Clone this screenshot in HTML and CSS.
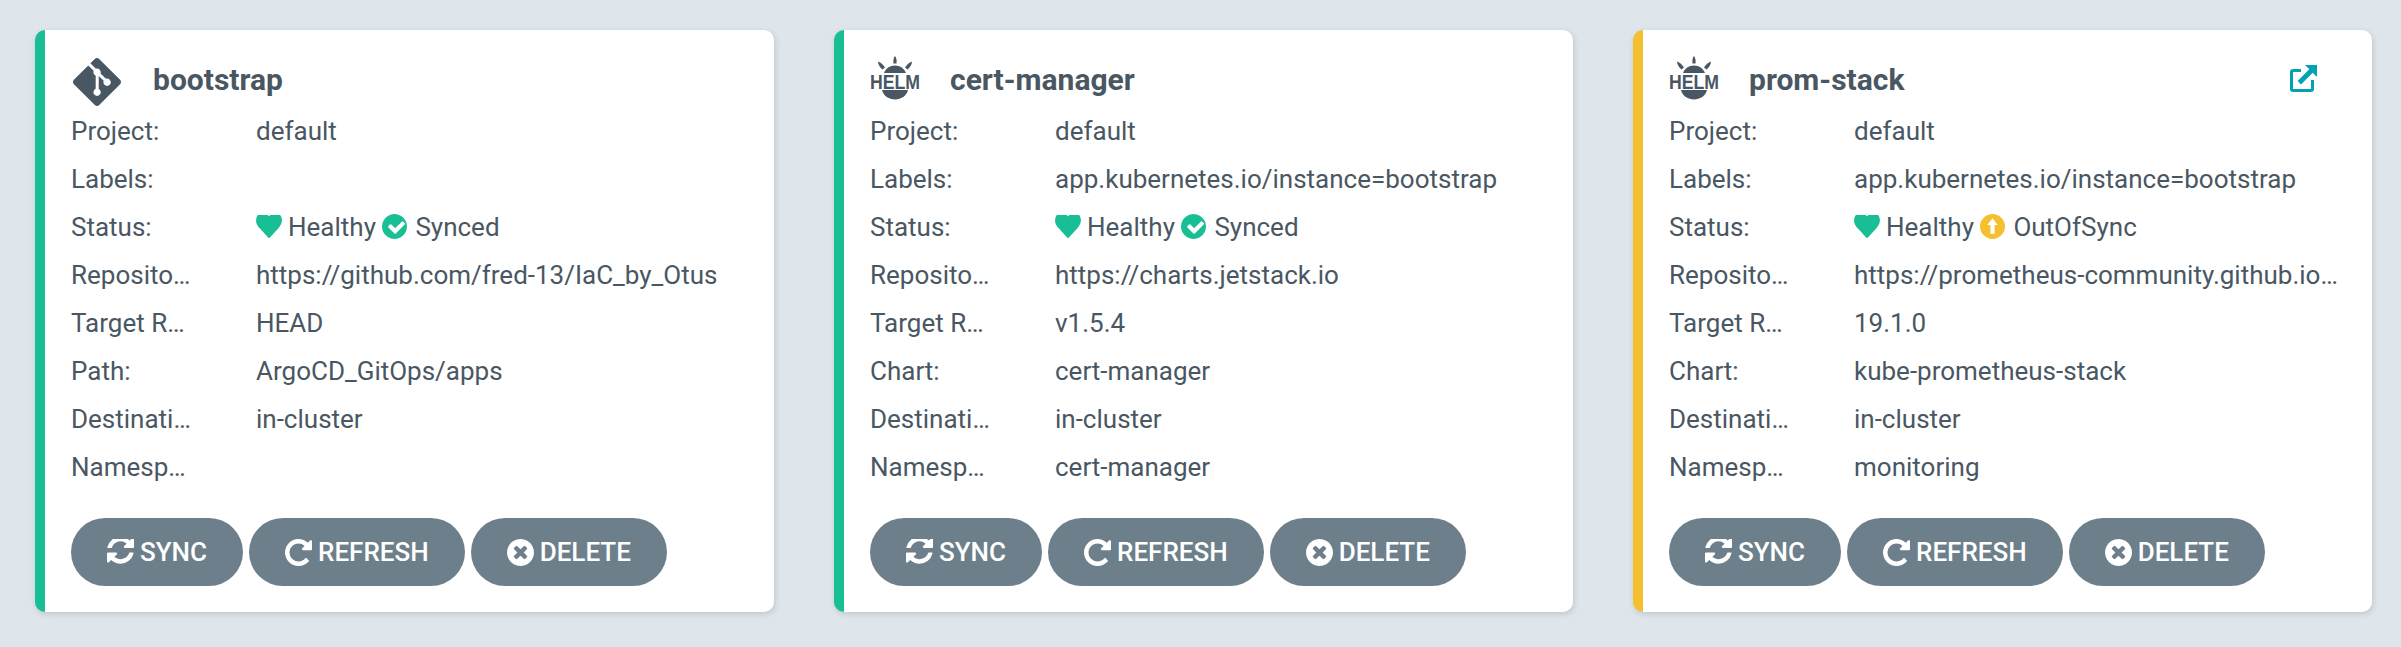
FILE: index.html
```html
<!DOCTYPE html>
<html>
<head>
  <link rel="stylesheet" href="styles.css">
</head>

<body>
  <svg class="sprites" xmlns="http://www.w3.org/2000/svg">
    <symbol id="i-git" viewBox="0 0 24 24"><path d="M23.546 10.93L13.067.452c-.604-.603-1.582-.603-2.188 0L8.708 2.627l2.76 2.76c.645-.215 1.379-.07 1.889.441.516.515.658 1.258.438 1.9l2.658 2.66c.645-.223 1.387-.078 1.9.435.721.72.721 1.884 0 2.604-.719.719-1.881.719-2.6 0-.539-.541-.674-1.337-.404-1.996L12.86 8.955v6.525c.176.086.342.203.488.348.713.721.713 1.883 0 2.6-.719.721-1.889.721-2.609 0-.719-.719-.719-1.879 0-2.598.182-.18.387-.316.605-.406V8.835c-.217-.091-.424-.222-.6-.401-.545-.545-.676-1.342-.396-2.009L7.636 3.7.45 10.881c-.6.605-.6 1.584 0 2.189l10.48 10.477c.604.604 1.582.604 2.186 0l10.43-10.43c.605-.603.605-1.582 0-2.187"/></symbol>
    <symbol id="i-helm" viewBox="0 0 50 44">
      <path d="M25 0c1.500 2 1.900 4.500 1.500 7.500h-3c-.4-3 0-5.500 1.500-7.500zM8 5.500c3 1 5 3 7 6l-2.500 2c-2.800-2.300-4.300-4.800-4.500-8zM42 5.500c-.2 3.200-1.700 5.700-4.500 8l-2.500-2c2-3 4-5 7-6zM14 17c1.500-4.500 6-7.500 11-7.500s9.500 3 11 7.500zM12 34h26c-1.500 6-7 9.500-13 9.500s-11.500-3.500-13-9.500z"/>
      <text class="helm-word" x="0" y="33" textLength="50" lengthAdjust="spacingAndGlyphs">HELM</text>
    </symbol>
    <symbol id="i-heart" viewBox="0 256 1792 1408" preserveAspectRatio="none"><path d="M896 1664q-26 0-44-18l-624-602q-10-8-27.500-26t-55.500-65.500-68-97.500-53.500-121-23.500-138q0-220 127-344t351-124q62 0 126.500 21.500t120 58 95.500 68.500 76 68q36-36 76-68t95.500-68.500 120-58 126.500-21.500q224 0 351 124t127 344q0 221-229 450l-623 600q-18 18-44 18z"/></symbol>
    <symbol id="i-check" viewBox="0 128 1536 1536"><path d="M1412 734q0-28-18-46l-91-90q-19-19-45-19t-45 19l-408 407-226-226q-19-19-45-19t-45 19l-91 90q-18 18-18 46 0 27 18 45l362 362q19 19 45 19 27 0 46-19l543-543q18-18 18-45zm124 162q0 209-103 385.500t-279.500 279.500-385.500 103-385.500-103-279.500-279.500-103-385.500 103-385.500 279.500-279.500 385.500-103 385.500 103 279.500 279.500 103 385.500z"/></symbol>
    <symbol id="i-up" viewBox="0 0 24 24"><path fill-rule="evenodd" d="M0 12a12 12 0 1 0 24 0a12 12 0 1 0-24 0zM12 4L17 10.500H14V19H10V10.500H7z"/></symbol>
    <symbol id="i-sync" viewBox="0 128 1536 1536"><path d="M1511 928q0 5-1 7-64 268-268 434.500t-478 166.500q-146 0-282.500-55t-243.500-157l-129 129q-19 19-45 19t-45-19-19-45v-448q0-26 19-45t45-19h448q26 0 45 19t19 45-19 45l-137 137q71 66 161 102t187 36q134 0 250-65t186-179q11-17 53-117 8-23 30-23h192q13 0 22.500 9.500t9.500 22.500zm25-800v448q0 26-19 45t-45 19h-448q-26 0-45-19t-19-45 19-45l138-138q-148-137-349-137-134 0-250 65t-186 179q-11 17-53 117-8 23-30 23h-199q-13 0-22.500-9.500t-9.500-22.500v-7q65-268 270-434.500t480-166.500q146 0 284 55.500t245 156.500l130-129q19-19 45-19t45 19 19 45z"/></symbol>
    <symbol id="i-repeat" viewBox="0 128 1536 1536"><path d="M1536 256v448q0 26-19 45t-45 19h-448q-42 0-59-40-17-39 14-69l138-138q-148-137-349-137-104 0-198.500 40.500t-163.500 109.500-109.500 163.500-40.500 198.500 40.500 198.500 109.500 163.500 163.500 109.500 198.500 40.500q119 0 225-52t179-147q7-10 23-12 15 0 25 9l137 138q9 8 9.500 20.500t-7.500 22.500q-109 132-264 204.500t-327 72.500q-156 0-298-61t-245-164-164-245-61-298 61-298 164-245 245-164 298-61q147 0 284.500 55.500t244.500 156.500l130-129q29-31 70-14 39 17 39 59z"/></symbol>
    <symbol id="i-times" viewBox="0 128 1536 1536"><path d="M1149 1122q0-26-19-45l-181-181 181-181q19-19 19-45 0-27-19-46l-90-90q-19-19-46-19-26 0-45 19l-181 181-181-181q-19-19-45-19-27 0-46 19l-90 90q-19 19-19 46 0 26 19 45l181 181-181 181q-19 19-19 45 0 27 19 46l90 90q19 19 46 19 26 0 45-19l181-181 181 181q19 19 45 19 27 0 46-19l90-90q19-19 19-46zm387-226q0 209-103 385.500t-279.500 279.500-385.500 103-385.500-103-279.500-279.500-103-385.500 103-385.500 279.500-279.500 385.500-103 385.500 103 279.500 279.500 103 385.500z"/></symbol>
    <symbol id="i-link" viewBox="0 0 27 27">
      <path d="M11 5.500H3a1.500 1.500 0 0 0-1.500 1.500V24a1.500 1.500 0 0 0 1.500 1.500H21a1.500 1.500 0 0 0 1.500-1.500V15" fill="none" stroke="#00a2b3" stroke-width="3"/>
      <path d="M15 0H27V12L22.700 7.700 11 19.400 7.600 16 19.300 4.300z"/>
    </symbol>
  </svg>

  <div class="apps">
    <div class="card card--synced">
      <div class="card__head">
        <svg class="logo logo--git"><use href="#i-git"/></svg>
        <span class="card__title">bootstrap</span>
      </div>
      <div class="row"><span class="row__label">Project:</span><span class="row__value">default</span></div>
      <div class="row"><span class="row__label">Labels:</span><span class="row__value"></span></div>
      <div class="row"><span class="row__label">Status:</span>
        <span class="row__value status">
          <svg class="ico-heart"><use href="#i-heart"/></svg>Healthy
          <svg class="ico-state"><use href="#i-check"/></svg>Synced
        </span>
      </div>
      <div class="row"><span class="row__label">Reposito…</span><span class="row__value">https://github.com/fred-13/IaC_by_Otus</span></div>
      <div class="row"><span class="row__label">Target R…</span><span class="row__value">HEAD</span></div>
      <div class="row"><span class="row__label">Path:</span><span class="row__value">ArgoCD_GitOps/apps</span></div>
      <div class="row"><span class="row__label">Destinati…</span><span class="row__value">in-cluster</span></div>
      <div class="row"><span class="row__label">Namesp…</span><span class="row__value"></span></div>
      <div class="actions">
        <a class="btn"><svg><use href="#i-sync"/></svg>SYNC</a>
        <a class="btn"><svg><use href="#i-repeat"/></svg>REFRESH</a>
        <a class="btn"><svg><use href="#i-times"/></svg>DELETE</a>
      </div>
    </div>

    <div class="card card--synced">
      <div class="card__head">
        <svg class="logo logo--helm"><use href="#i-helm"/></svg>
        <span class="card__title">cert-manager</span>
      </div>
      <div class="row"><span class="row__label">Project:</span><span class="row__value">default</span></div>
      <div class="row"><span class="row__label">Labels:</span><span class="row__value">app.kubernetes.io/instance=bootstrap</span></div>
      <div class="row"><span class="row__label">Status:</span>
        <span class="row__value status">
          <svg class="ico-heart"><use href="#i-heart"/></svg>Healthy
          <svg class="ico-state"><use href="#i-check"/></svg>Synced
        </span>
      </div>
      <div class="row"><span class="row__label">Reposito…</span><span class="row__value">https://charts.jetstack.io</span></div>
      <div class="row"><span class="row__label">Target R…</span><span class="row__value">v1.5.4</span></div>
      <div class="row"><span class="row__label">Chart:</span><span class="row__value">cert-manager</span></div>
      <div class="row"><span class="row__label">Destinati…</span><span class="row__value">in-cluster</span></div>
      <div class="row"><span class="row__label">Namesp…</span><span class="row__value">cert-manager</span></div>
      <div class="actions">
        <a class="btn"><svg><use href="#i-sync"/></svg>SYNC</a>
        <a class="btn"><svg><use href="#i-repeat"/></svg>REFRESH</a>
        <a class="btn"><svg><use href="#i-times"/></svg>DELETE</a>
      </div>
    </div>

    <div class="card card--outofsync">
      <div class="card__head">
        <svg class="logo logo--helm"><use href="#i-helm"/></svg>
        <span class="card__title">prom-stack</span>
        <svg class="card__link"><use href="#i-link"/></svg>
      </div>
      <div class="row"><span class="row__label">Project:</span><span class="row__value">default</span></div>
      <div class="row"><span class="row__label">Labels:</span><span class="row__value">app.kubernetes.io/instance=bootstrap</span></div>
      <div class="row"><span class="row__label">Status:</span>
        <span class="row__value status">
          <svg class="ico-heart"><use href="#i-heart"/></svg>Healthy
          <svg class="ico-state ico-state--warn"><use href="#i-up"/></svg>OutOfSync
        </span>
      </div>
      <div class="row"><span class="row__label">Reposito…</span><span class="row__value">https://prometheus-community.github.io…</span></div>
      <div class="row"><span class="row__label">Target R…</span><span class="row__value">19.1.0</span></div>
      <div class="row"><span class="row__label">Chart:</span><span class="row__value">kube-prometheus-stack</span></div>
      <div class="row"><span class="row__label">Destinati…</span><span class="row__value">in-cluster</span></div>
      <div class="row"><span class="row__label">Namesp…</span><span class="row__value">monitoring</span></div>
      <div class="actions">
        <a class="btn"><svg><use href="#i-sync"/></svg>SYNC</a>
        <a class="btn"><svg><use href="#i-repeat"/></svg>REFRESH</a>
        <a class="btn"><svg><use href="#i-times"/></svg>DELETE</a>
      </div>
    </div>
  </div>
</body>
</html>
```

FILE: styles.css
```css
body {
  margin: 0;
  background-color: #dee6eb;
  color: #495763;
  font-family: Roboto, "Liberation Sans", sans-serif;
  font-size: 26px;
}

.sprites {
  display: none;
}

.apps {
  display: grid;
  grid-template-columns: repeat(3, 1fr);
  gap: 60px;
  padding: 30px 29px 35px 35px;
}

.card {
  background-color: #fff;
  border-left: 10px solid #18be94;
  border-radius: 10px;
  box-shadow: 1px 2px 6px rgba(0, 0, 0, 0.14);
  padding: 28px 26px 26px 26px;
}

.card--outofsync {
  border-left-color: #f4c030;
}

.card__head {
  display: flex;
  align-items: flex-start;
  height: 48px;
}

.logo {
  fill: #495763;
  flex: none;
}

.logo--git {
  width: 48px;
  height: 48px;
  margin: 0 32px 0 2px;
}

.logo--helm {
  width: 50px;
  height: 44px;
  margin: -2px 30px 0 0;
}

.helm-word {
  font-family: "Liberation Sans", sans-serif;
  font-size: 21px;
  font-weight: 700;
}

.card__title {
  font-size: 30px;
  font-weight: 700;
  line-height: 44px;
}

.card__link {
  fill: #00a2b3;
  width: 27px;
  height: 27px;
  margin: 7px 29px 0 auto;
}

.row {
  display: grid;
  grid-template-columns: 125px 1fr;
  column-gap: 60px;
  height: 48px;
  line-height: 50px;
}

.row__label,
.row__value {
  white-space: nowrap;
}

.status svg {
  vertical-align: -3px;
}

.status .ico-heart {
  fill: #18be94;
  width: 26px;
  height: 23px;
  margin-right: 6px;
  vertical-align: -2px;
}

.ico-state {
  fill: #18be94;
  width: 25px;
  height: 25px;
  margin-right: 8px;
}

.ico-state--warn {
  fill: #f4c030;
}

.actions {
  display: flex;
  gap: 6px;
  margin-top: 28px;
}

.btn {
  display: flex;
  align-items: center;
  justify-content: center;
  height: 68px;
  padding: 0 36px;
  border-radius: 34px;
  background-color: #6d7f8b;
  color: #fff;
  font-weight: 500;
}

.btn svg {
  fill: #fff;
  width: 27px;
  height: 27px;
  margin-right: 6px;
}
```
